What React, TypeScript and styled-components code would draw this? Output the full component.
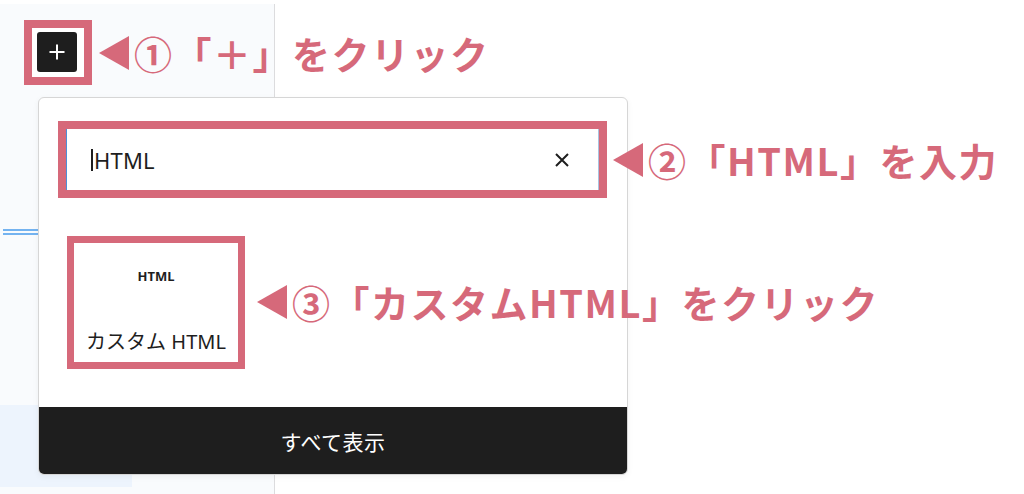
import React from "react";
import styled, { createGlobalStyle } from "styled-components";

const PINK = "#d6697a";

const Global = createGlobalStyle`
  html, body { margin: 0; padding: 0; background: #ffffff; }
  body { font-family: "Noto Sans", "Noto Sans CJK JP", sans-serif; }
  * { box-sizing: border-box; }
`;

const Page = styled.div`
  position: relative;
  width: 1024px;
  height: 494px;
  overflow: hidden;
  display: grid;
  grid-template-columns: 275px 1fr;
  background: #ffffff;
`;

const LeftPane = styled.div`
  margin-top: 4px;
  background: #f9fbfd;
  border-right: 1px solid #dcdcde;
  display: flex;
  flex-direction: column;
  align-items: flex-start;
  padding-top: 16px;
`;

const RightPane = styled.div`
  background: #ffffff;
`;

const HighlightFrame = styled.div`
  margin-left: 24px;
  display: inline-flex;
  padding: 4px 7px 5px 5px;
  border: 8px solid ${PINK};
  background: #ffffff;
`;

const PlusButton = styled.button`
  width: 40px;
  height: 40px;
  border: none;
  border-radius: 3px;
  background: #1e1e1e;
  display: flex;
  align-items: center;
  justify-content: center;
  padding: 0;
`;

const Separator = styled.div`
  margin-top: 144px;
  margin-left: 3px;
  width: 36px;
  height: 6px;
  border-top: 2px solid #74b3f0;
  border-bottom: 2px solid #74b3f0;
`;

const SelectedBlock = styled.div`
  margin-top: 170px;
  width: 132px;
  height: 82px;
  background: #edf4fd;
`;

const Popover = styled.div`
  position: absolute;
  left: 38px;
  top: 97px;
  width: 590px;
  height: 378px;
  background: #ffffff;
  border: 1px solid #d6d6d6;
  border-radius: 6px;
  box-shadow: 0 2px 6px rgba(0, 0, 0, 0.05);
  display: flex;
  flex-direction: column;
`;

const SearchRow = styled.div`
  padding: 31px 28px 0 27px;
`;

const SearchField = styled.div`
  height: 61px;
  display: flex;
  align-items: center;
  padding: 0 28px 0 24px;
  border-left: 1px solid #4d8fd6;
  border-right: 1px solid #a9c3e0;
  background: #ffffff;
  outline: 8px solid ${PINK};
  outline-offset: 0;
`;

const SearchText = styled.span`
  flex: 1;
  display: flex;
  align-items: center;
  font-family: "Noto Sans", sans-serif;
  font-size: 22px;
  color: #1e1e1e;
  letter-spacing: 0.2px;
`;

const Caret = styled.span`
  display: inline-block;
  width: 2px;
  height: 22px;
  background: #1e1e1e;
  margin-right: 1px;
`;

const ClearIcon = styled.svg`
  width: 16px;
  height: 16px;
  display: block;
`;

const BlockList = styled.div`
  padding: 53px 0 0 35px;
`;

const BlockItem = styled.button`
  width: 164px;
  height: 119px;
  border: none;
  background: #ffffff;
  padding: 0;
  display: flex;
  flex-direction: column;
  align-items: center;
  outline: 7px solid ${PINK};
  outline-offset: 0;
`;

const BlockIconText = styled.span`
  margin-top: 24px;
  font-family: "Noto Sans", sans-serif;
  font-weight: 700;
  font-size: 13px;
  line-height: 18px;
  color: #1e1e1e;
`;

const BlockLabel = styled.span`
  margin-top: 44px;
  font-family: "Noto Sans", "Noto Sans CJK JP", sans-serif;
  font-size: 20px;
  line-height: 26px;
  color: #1e1e1e;
`;

const Footer = styled.div`
  margin-top: auto;
  height: 67px;
  background: #1e1e1e;
  border-radius: 0 0 5px 5px;
  display: flex;
  align-items: center;
  justify-content: center;
  color: #ffffff;
  font-family: "Noto Sans CJK JP", sans-serif;
  font-size: 21px;
  letter-spacing: 0.5px;
`;

const Callout = styled.div<{ $x: number; $y: number }>`
  position: absolute;
  left: ${(p) => p.$x}px;
  top: ${(p) => p.$y - 22}px;
  height: 44px;
  display: flex;
  align-items: center;
  gap: 5px;
  white-space: nowrap;
`;

const Arrow = styled.span`
  width: 0;
  height: 0;
  border-top: 17px solid transparent;
  border-bottom: 17px solid transparent;
  border-right: 30px solid ${PINK};
`;

const CalloutText = styled.span`
  font-family: "Noto Sans CJK JP", sans-serif;
  font-weight: 700;
  font-size: 38px;
  line-height: 44px;
  letter-spacing: 1.5px;
  color: ${PINK};
`;

export default function App() {
  return (
    <>
      <Global />
      <Page>
        <LeftPane>
          <HighlightFrame>
            <PlusButton aria-label="ブロックを追加">
              <svg width="18" height="18" viewBox="0 0 18 18">
                <path d="M9 1.5v15M1.5 9h15" stroke="#ffffff" strokeWidth="2" />
              </svg>
            </PlusButton>
          </HighlightFrame>
          <Separator />
          <SelectedBlock />
        </LeftPane>
        <RightPane />

        <Popover>
          <SearchRow>
            <SearchField>
              <SearchText>
                <Caret />
                HTML
              </SearchText>
              <ClearIcon viewBox="0 0 16 16">
                <path d="M2 2l12 12M14 2L2 14" stroke="#1e1e1e" strokeWidth="2" />
              </ClearIcon>
            </SearchField>
          </SearchRow>
          <BlockList>
            <BlockItem>
              <BlockIconText>HTML</BlockIconText>
              <BlockLabel>カスタム HTML</BlockLabel>
            </BlockItem>
          </BlockList>
          <Footer>すべて表示</Footer>
        </Popover>

        <Callout $x={99} $y={53}>
          <Arrow />
          <CalloutText>①「＋」をクリック</CalloutText>
        </Callout>
        <Callout $x={613} $y={160}>
          <Arrow />
          <CalloutText>②「HTML」を入力</CalloutText>
        </Callout>
        <Callout $x={257} $y={302}>
          <Arrow />
          <CalloutText>③「カスタムHTML」をクリック</CalloutText>
        </Callout>
      </Page>
    </>
  );
}
